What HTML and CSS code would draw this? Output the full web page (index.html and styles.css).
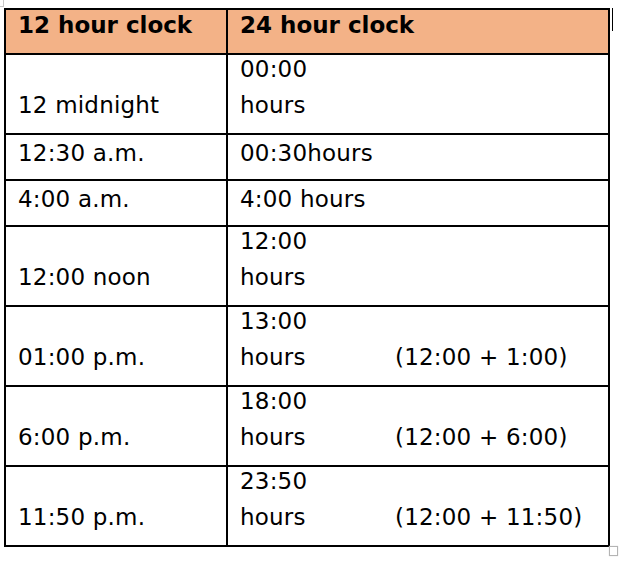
FILE: index.html
```html
<!DOCTYPE html>
<html>
<head>
<meta charset="utf-8">
<link rel="stylesheet" href="styles.css">
</head>
<body>
<div class="mark-tl"></div>
<div class="cursor"></div>
<div class="tbl">
  <div class="c hd">12 hour clock</div>
  <div class="c hd">24 hour clock</div>

  <div class="c tall"><div class="in"><div class="ln"></div><div class="ln">12 midnight</div></div></div>
  <div class="c tall"><div class="in"><div class="ln">00:00</div><div class="ln">hours</div></div></div>

  <div class="c short">12:30 a.m.</div>
  <div class="c short">00:30hours</div>

  <div class="c short">4:00 a.m.</div>
  <div class="c short">4:00 hours</div>

  <div class="c tall"><div class="in"><div class="ln"></div><div class="ln">12:00 noon</div></div></div>
  <div class="c tall"><div class="in"><div class="ln">12:00</div><div class="ln">hours</div></div></div>

  <div class="c tall"><div class="in"><div class="ln"></div><div class="ln">01:00 p.m.</div></div></div>
  <div class="c tall"><div class="in"><div class="ln">13:00</div><div class="ln split"><span class="w">hours</span><span>(12:00 + 1:00)</span></div></div></div>

  <div class="c tall"><div class="in"><div class="ln"></div><div class="ln">6:00 p.m.</div></div></div>
  <div class="c tall"><div class="in"><div class="ln">18:00</div><div class="ln split"><span class="w">hours</span><span>(12:00 + 6:00)</span></div></div></div>

  <div class="c tall"><div class="in"><div class="ln"></div><div class="ln">11:50 p.m.</div></div></div>
  <div class="c tall"><div class="in"><div class="ln">23:50</div><div class="ln split"><span class="w">hours</span><span>(12:00 + 11:50)</span></div></div></div>
</div>
<div class="mark-br"></div>
</body>
</html>
```
FILE: styles.css
```css
html, body {
  margin: 0;
  padding: 0;
  background: #ffffff;
}
body {
  position: relative;
  width: 626px;
  height: 564px;
  overflow: hidden;
  font-family: "DejaVu Sans", Verdana, sans-serif;
  font-size: 23px;
  letter-spacing: 0.2px;
  color: #000000;
}
.tbl {
  margin: 8px 0 0 4px;
  width: 606px;
  box-sizing: border-box;
  display: grid;
  grid-template-columns: 222px 382px;
  grid-template-rows: 45px 80px 46px 46px 80px 80px 80px 80px;
  border-left: 2px solid #000;
  border-top: 2px solid #000;
}
.c {
  box-sizing: border-box;
  border-right: 2px solid #000;
  border-bottom: 2px solid #000;
  padding-left: 12px;
  white-space: nowrap;
  overflow: hidden;
}
.hd {
  background: #f3b287;
  font-weight: bold;
  letter-spacing: 0;
  line-height: 31px;
}
.short {
  line-height: 36px;
}
.tall {
  line-height: 36px;
}
.tall .in {
  margin-top: -4px;
}
.ln {
  height: 36px;
}
.split {
  display: flex;
}
.split .w {
  width: 155px;
  flex: none;
}
.mark-tl {
  position: absolute;
  left: -7px;
  top: -4px;
  width: 9px;
  height: 9px;
  border: 1px solid #c8c8c8;
}
.mark-br {
  position: absolute;
  left: 609px;
  top: 546px;
  width: 7px;
  height: 8px;
  border: 1px solid #b4b4b4;
  box-shadow: 0 0 1px #d0d0d0;
  background: #fff;
}
.cursor {
  position: absolute;
  left: 612px;
  top: 8px;
  width: 1px;
  height: 23px;
  background: #000;
}
```
